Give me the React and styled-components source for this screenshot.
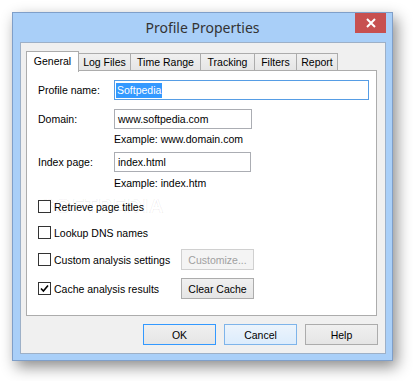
import React from "react";
import styled, { createGlobalStyle } from "styled-components";

const Global = createGlobalStyle`
  html, body { margin: 0; padding: 0; background: #ffffff; }
  body { font-family: "Liberation Sans", Arial, sans-serif; font-size: 10.5px; color: #000; }
  * { box-sizing: border-box; }
`;

const Desktop = styled.div`
  width: 413px;
  height: 381px;
  padding: 12px 0 0 12px;
`;

const Window = styled.div`
  width: 381px;
  height: 349px;
  border: 1px solid #7f9fc9;
  background: #a9cff8;
  box-shadow: 4px 6px 14px rgba(0, 0, 0, 0.45);
  display: flex;
  flex-direction: column;
`;

const TitleBar = styled.div`
  height: 29px;
  position: relative;
  display: flex;
  align-items: center;
  justify-content: center;
`;

const Title = styled.div`
  font-family: "Noto Sans", "Open Sans", sans-serif;
  font-size: 14px;
  color: #333333;
`;

const CloseButton = styled.div`
  position: absolute;
  top: 0;
  right: 6px;
  width: 31px;
  height: 20px;
  background: #c75050;
  display: flex;
  align-items: center;
  justify-content: center;
`;

const Client = styled.div`
  margin: 0 6px 6px 7px;
  flex: 1;
  border: 1px solid #9db0c7;
  background: #f0f0f0;
  padding: 7px 7px 0 5px;
  display: flex;
  flex-direction: column;
`;

const TabStrip = styled.div`
  display: flex;
  align-items: flex-end;
  height: 21px;
  position: relative;
  z-index: 1;
`;

const Tab = styled.div`
  width: ${(p) => p.$w}px;
  height: ${(p) => (p.$active ? 21 : 18)}px;
  margin-left: ${(p) => (p.$first ? 0 : -1)}px;
  margin-bottom: ${(p) => (p.$active ? -1 : 0)}px;
  border: 1px solid #acacac;
  border-bottom: ${(p) => (p.$active ? "none" : "1px solid #acacac")};
  background: ${(p) =>
    p.$active ? "#ffffff" : "linear-gradient(#f0f0f0, #e5e5e5)"};
  display: flex;
  align-items: center;
  justify-content: center;
  padding-bottom: ${(p) => (p.$active ? 3 : 0)}px;
  position: relative;
  z-index: ${(p) => (p.$active ? 2 : 1)};
`;

const Panel = styled.div`
  width: 351px;
  height: 246px;
  margin-top: -1px;
  border: 1px solid #acacac;
  background: #ffffff;
  padding: 9px 0 0 11px;
  display: flex;
  flex-direction: column;
  position: relative;
`;

const FieldRow = styled.div`
  display: flex;
  align-items: center;
  height: 20px;
  margin-top: ${(p) => p.$mt || 0}px;
`;

const Label = styled.div`
  width: 76px;
`;

const TextBox = styled.div`
  width: ${(p) => p.$w}px;
  height: 20px;
  border: 1px solid ${(p) => (p.$focus ? "#569de5" : "#abadb3")};
  background: #fff;
  padding-left: ${(p) => (p.$focus ? 1 : 3)}px;
  display: flex;
  align-items: center;
`;

const Selected = styled.span`
  background: #3399ff;
  color: #ffffff;
  line-height: 15px;
  padding: 0 1px;
`;

const Hint = styled.div`
  margin: ${(p) => p.$mt}px 0 0 76px;
  height: 14px;
  line-height: 14px;
`;

const CheckRow = styled.div`
  display: flex;
  align-items: center;
  height: 21px;
  margin-top: ${(p) => p.$mt}px;
  position: relative;
  z-index: 1;
`;

const CheckLabel = styled.div`
  display: flex;
  align-items: center;
  width: 143px;
  gap: 3px;
`;

const Box = styled.div`
  width: 13px;
  height: 13px;
  border: 1px solid #333333;
  background: #ffffff;
  display: flex;
  align-items: center;
  justify-content: center;
`;

const Button = styled.div`
  width: 73px;
  height: 21px;
  border: 1px solid ${(p) => p.$border || "#acacac"};
  background: ${(p) => p.$bg || "linear-gradient(#f0f0f0, #e5e5e5)"};
  color: ${(p) => (p.$disabled ? "#a0a0a0" : "#000")};
  display: flex;
  align-items: center;
  justify-content: center;
`;

const Footer = styled.div`
  display: flex;
  justify-content: flex-end;
  gap: 8px;
  margin-top: 8px;
`;

const Watermark = styled.div`
  position: absolute;
  left: 14px;
  top: 124px;
  font-family: "Liberation Sans", Arial, sans-serif;
  font-weight: bold;
  font-size: 20px;
  line-height: 22px;
  letter-spacing: 1px;
  color: rgba(0, 0, 0, 0.025);
  -webkit-text-stroke: 0.7px rgba(0, 0, 0, 0.09);
  pointer-events: none;
  z-index: 0;
`;

const tabs = [
  ["General", 53],
  ["Log Files", 53],
  ["Time Range", 71],
  ["Tracking", 55],
  ["Filters", 43],
  ["Report", 42],
];

function Check({ checked }) {
  return (
    <Box>
      {checked && (
        <svg width="9" height="9" viewBox="0 0 9 9">
          <path d="M1 4.5 L3.4 7 L8 1.5" fill="none" stroke="#000" strokeWidth="1.6" />
        </svg>
      )}
    </Box>
  );
}

export default function App() {
  return (
    <>
      <Global />
      <Desktop>
        <Window>
          <TitleBar>
            <Title>Profile Properties</Title>
            <CloseButton>
              <svg width="10" height="10" viewBox="0 0 10 10">
                <path d="M1 1 L9 9 M9 1 L1 9" stroke="#fff" strokeWidth="2" />
              </svg>
            </CloseButton>
          </TitleBar>
          <Client>
            <TabStrip>
              {tabs.map(([t, w], i) => (
                <Tab key={t} $w={w} $first={i === 0} $active={i === 0}>
                  {t}
                </Tab>
              ))}
            </TabStrip>
            <Panel>
              <Watermark>SOFTPEDIA</Watermark>
              <FieldRow>
                <Label>Profile name:</Label>
                <TextBox $w={255} $focus>
                  <Selected>Softpedia</Selected>
                </TextBox>
              </FieldRow>
              <FieldRow $mt={9}>
                <Label>Domain:</Label>
                <TextBox $w={138}>www.softpedia.com</TextBox>
              </FieldRow>
              <Hint $mt={3}>Example: www.domain.com</Hint>
              <FieldRow $mt={6}>
                <Label>Index page:</Label>
                <TextBox $w={137}>index.html</TextBox>
              </FieldRow>
              <Hint $mt={4}>Example: index.htm</Hint>
              <CheckRow $mt={6}>
                <CheckLabel>
                  <Check />
                  Retrieve page titles
                </CheckLabel>
              </CheckRow>
              <CheckRow $mt={5}>
                <CheckLabel>
                  <Check />
                  Lookup DNS names
                </CheckLabel>
              </CheckRow>
              <CheckRow $mt={6}>
                <CheckLabel>
                  <Check />
                  Custom analysis settings
                </CheckLabel>
                <Button $disabled $bg="#f4f4f4" $border="#d0d0d0">
                  Customize...
                </Button>
              </CheckRow>
              <CheckRow $mt={8}>
                <CheckLabel>
                  <Check checked />
                  Cache analysis results
                </CheckLabel>
                <Button>Clear Cache</Button>
              </CheckRow>
            </Panel>
            <Footer>
              <Button $border="#3399ff">OK</Button>
              <Button $border="#7eb4ea" $bg="linear-gradient(#ecf4fc, #dcecfc)">
                Cancel
              </Button>
              <Button>Help</Button>
            </Footer>
          </Client>
        </Window>
      </Desktop>
    </>
  );
}
